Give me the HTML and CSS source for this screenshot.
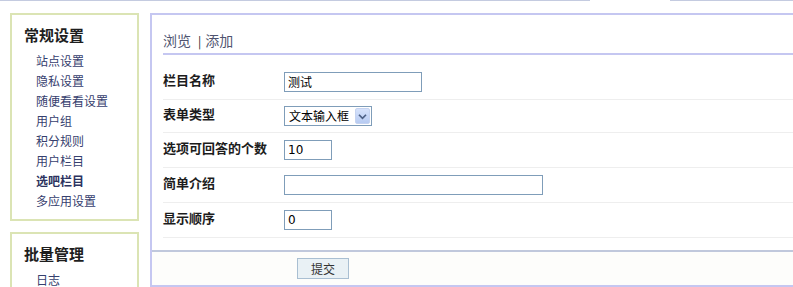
FILE: index.html
```html
<!DOCTYPE html>
<html lang="zh-CN">
<head>
  <meta charset="UTF-8" />
  <title>选吧栏目 - 添加</title>
  <link rel="stylesheet" href="styles.css">
</head>
<body>
  <!-- barra superior -->
  <div class="topbar">
    <span class="topbar-seg left"></span>
    <span class="topbar-seg right"></span>
  </div>

  <div class="layout">
    <!-- menú lateral -->
    <aside class="side">
      <div class="side-box">
        <h3>常规设置</h3>
        <ul>
          <li>站点设置</li>
          <li>隐私设置</li>
          <li>随便看看设置</li>
          <li>用户组</li>
          <li>积分规则</li>
          <li>用户栏目</li>
          <li class="current">选吧栏目</li>
          <li>多应用设置</li>
        </ul>
      </div>
      <div class="side-box">
        <h3>批量管理</h3>
        <ul>
          <li>日志</li>
        </ul>
      </div>
    </aside>

    <!-- contenido principal -->
    <main class="main">
      <div class="main-head">浏览<span class="sep">|</span>添加</div>

      <div class="form">
        <div class="row">
          <label>栏目名称</label>
          <div><span class="input w-name">测试</span></div>
        </div>
        <div class="row row-select">
          <label>表单类型</label>
          <div>
            <span class="select">
              <span class="select-text">文本输入框</span>
              <span class="select-btn">
                <svg viewBox="0 0 10 8" width="9" height="7"><path d="M1 2 L5 6 L9 2" fill="none" stroke="#4d6185" stroke-width="2"/></svg>
              </span>
            </span>
          </div>
        </div>
        <div class="row">
          <label>选项可回答的个数</label>
          <div><span class="input w-num num">10</span></div>
        </div>
        <div class="row">
          <label>简单介绍</label>
          <div><span class="input w-desc"></span></div>
        </div>
        <div class="row">
          <label>显示顺序</label>
          <div><span class="input w-num num">0</span></div>
        </div>
      </div>

      <div class="submit-bar">
        <button class="btn-submit">提交</button>
      </div>
    </main>
  </div>
</body>
</html>
```

FILE: styles.css
```css
/* base */
* {
  box-sizing: border-box;
}

body {
  margin: 0;
  background: #fff;
  font-family: "Noto Sans CJK SC", "DejaVu Sans", sans-serif;
  font-size: 12px;
  color: #222;
  overflow: hidden;
}

/* barra superior */
.topbar {
  display: flex;
  height: 1px;
  gap: 80px;
}

.topbar-seg {
  background: #c4cbe0;
}

.topbar-seg.left {
  width: 590px;
}

.topbar-seg.right {
  flex: 1;
}

.layout {
  display: flex;
  gap: 11px;
  padding: 12px 0 0 10px;
  align-items: flex-start;
}

/* menú lateral */
.side {
  width: 129px;
  display: flex;
  flex-direction: column;
  gap: 11px;
}

.side-box {
  border: 2px solid #dbe4b4;
  padding: 10px 0 8px 12px;
}

.side-box h3 {
  margin: 0 0 6px;
  font-size: 15px;
  line-height: 20px;
  font-weight: 700;
  color: #1e1e1e;
}

.side-box ul {
  list-style: none;
  margin: 0;
  padding: 0 0 0 12px;
}

.side-box li {
  line-height: 20px;
  font-size: 12px;
  color: #36406e;
}

.side-box li.current {
  font-weight: 700;
  color: #2c3360;
}

/* panel principal */
.main {
  flex: 1;
  border: 2px solid #c5c7f1;
  border-right: none;
}

.main-head {
  margin-left: 11px;
  padding: 15px 0 2px;
  line-height: 20px;
  font-size: 14px;
  color: #4f5470;
  border-bottom: 2px solid #c5c7f1;
}

.main-head .sep {
  font-size: 12px;
  color: #222;
  margin: 0 4px 0 7px;
}

.form {
  margin: 10px 0 0 11px;
}

.row {
  display: grid;
  grid-template-columns: 121px 1fr;
  padding: 7px 0;
  border-bottom: 1px solid #eeeeee;
}

.row-select {
  padding: 6px 0;
}

.row label {
  font-size: 13px;
  line-height: 16px;
  font-weight: 700;
  color: #1c1c1c;
}

.input {
  display: block;
  height: 20px;
  border: 1px solid #7f9db9;
  background: #fff;
  padding-left: 3px;
  line-height: 18px;
  font-size: 12px;
  color: #000;
}

.input.num {
  font-family: "DejaVu Sans", sans-serif;
  font-size: 12px;
}

.w-name {
  width: 138px;
}

.w-num {
  width: 48px;
}

.w-desc {
  width: 259px;
}

/* selector estilo XP */
.select {
  display: flex;
  width: 88px;
  height: 20px;
  border: 1px solid #7f9db9;
  padding: 1px;
  align-items: stretch;
}

.select-text {
  flex: 1;
  padding-left: 3px;
  line-height: 16px;
  color: #000;
}

.select-btn {
  width: 15px;
  display: flex;
  align-items: center;
  justify-content: center;
  background: linear-gradient(#d6e2fb, #b7cbf2);
  border: 1px solid #c5d3f0;
  border-radius: 2px;
}

/* barra de envío */
.submit-bar {
  margin-top: 12px;
  border-top: 2px solid #c0c8dc;
  padding: 6px 0 6px 145px;
  background: #fdfdfb;
}

.btn-submit {
  display: block;
  width: 52px;
  height: 21px;
  border: 1px solid #a9bfd2;
  background: #e9f1f5;
  font-family: "Noto Sans CJK SC", sans-serif;
  font-size: 12px;
  color: #333;
  padding: 0;
  line-height: 19px;
}
```
